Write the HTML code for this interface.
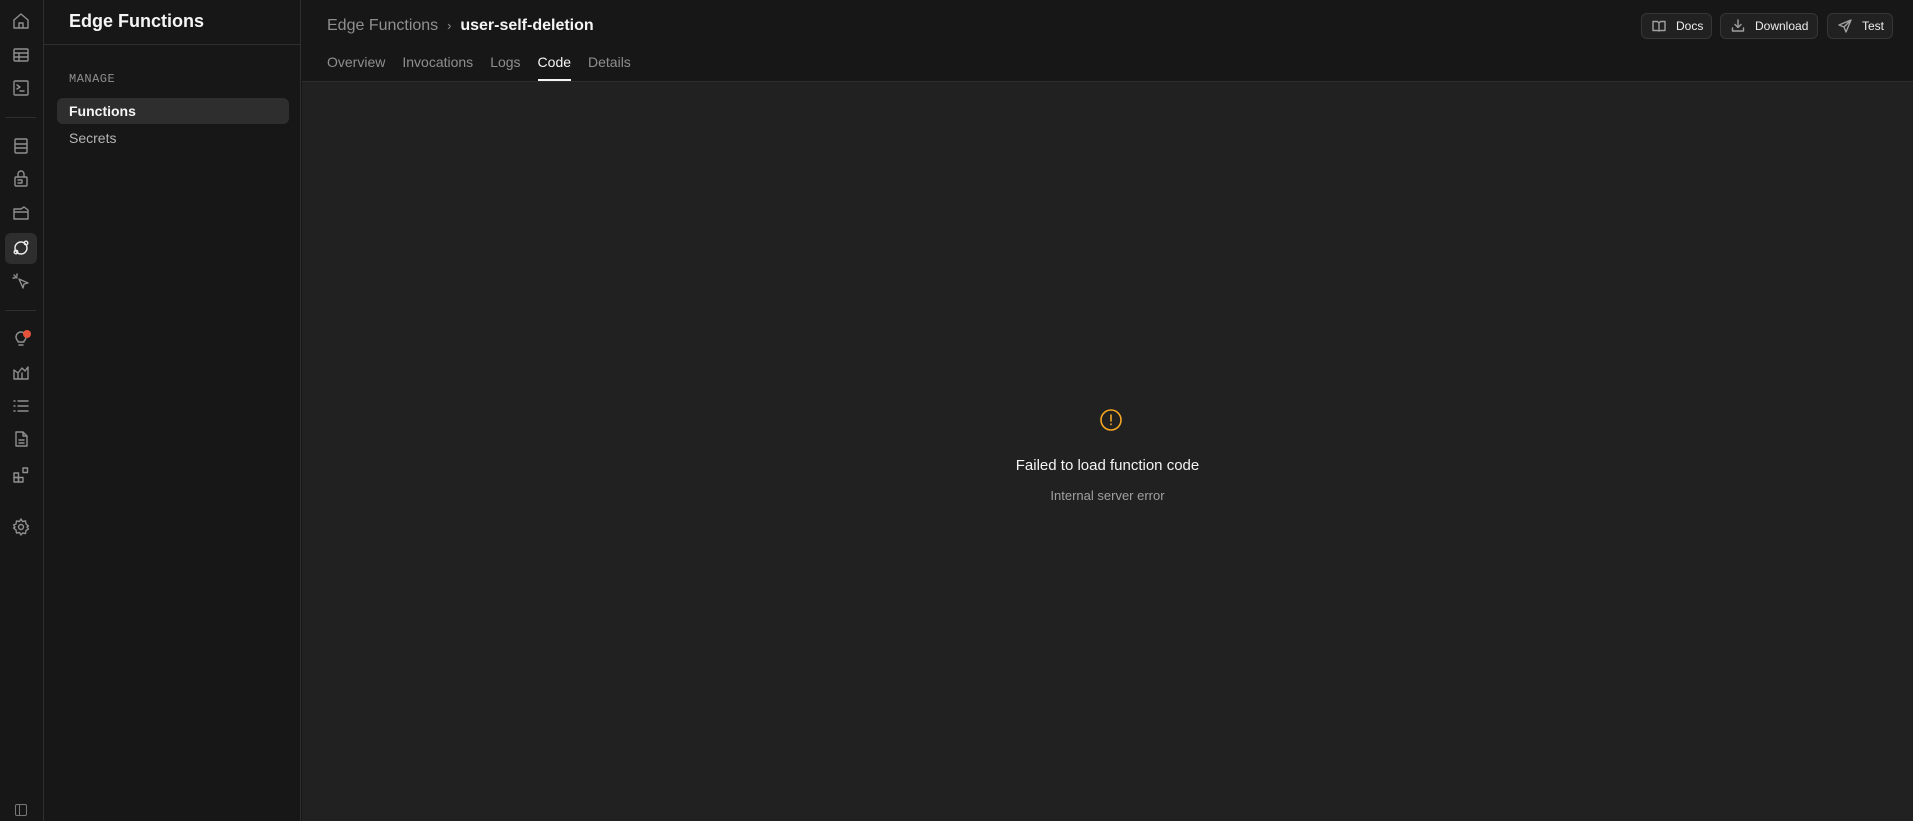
<!DOCTYPE html>
<html><head><meta charset="utf-8"><style>
*{box-sizing:border-box;margin:0;padding:0}
body{width:1913px;height:821px;background:#171717;font-family:"Liberation Sans",sans-serif;position:relative;overflow:hidden;color:#ededed}
.rail{position:absolute;left:0;top:0;width:44px;height:821px;background:#171717;border-right:1px solid #2e2e2e}
.ic{position:absolute;left:11px;width:20px;height:20px}
.ic svg{width:20px;height:20px;fill:none;stroke:#8f8f8f;stroke-width:1.4;stroke-linecap:round;stroke-linejoin:round}
.div{position:absolute;left:5px;width:31px;height:1px;background:#2e2e2e}
.active{position:absolute;left:5px;top:233px;width:32px;height:31px;background:#2e2e2e;border-radius:6px}
.side{position:absolute;left:44px;top:0;width:257px;height:821px;background:#171717;border-right:1px solid #2e2e2e}
.side h1{position:absolute;left:25px;top:11px;font-size:18px;font-weight:bold;color:#f5f5f5}
.side .hl{position:absolute;left:0;top:44px;width:256px;height:1px;background:#2e2e2e}
.manage{position:absolute;left:25px;top:72px;font-family:"Liberation Mono",monospace;font-size:12px;color:#8f8f8f;letter-spacing:.5px}
.item{position:absolute;left:13px;width:232px;height:26px;border-radius:6px;font-size:14px;padding-left:12px;line-height:26px}
.hdr{position:absolute;left:302px;top:0;right:0;height:82px;background:#171717;border-bottom:1px solid #2e2e2e}
.main{position:absolute;left:302px;top:82px;right:0;bottom:0;background:#212121}
.bc{position:absolute;left:25px;top:17px;font-size:16px;color:#8f8f8f}
.bc b{color:#f5f5f5;font-weight:bold}
.tabs{position:absolute;left:25px;top:54px;font-size:14px;color:#8f8f8f}
.tabs span{margin-right:17px;display:inline-block;height:27px;position:relative}
.tabs .on{color:#f5f5f5}
.tabs .on:after{content:"";position:absolute;left:0;right:0;bottom:0;height:2px;background:#f5f5f5}
.btn{position:absolute;top:13px;height:26px;border:1px solid #363636;background:#212121;border-radius:6px;font-size:12px;color:#ededed;line-height:24px;padding-left:34px}
.btn svg{position:absolute;left:10px;top:5px;width:14px;height:14px;fill:none;stroke:#a0a0a0;stroke-width:1.4;stroke-linecap:round;stroke-linejoin:round}
</style></head><body>
<div class="rail">
<div class="ic" style="top:11px"><svg viewBox="0 0 20 20"><path d="M3 9l7-6 7 6v8H3z M8 17v-5h4v5"/></svg></div>
<div class="ic" style="top:45px"><svg viewBox="0 0 20 20"><rect x="3" y="4" width="14" height="12" rx="1"/><path d="M3 8h14M3 12h14M8 8v8"/></svg></div>
<div class="ic" style="top:78px"><svg viewBox="0 0 20 20"><rect x="3" y="3" width="14" height="14" rx="1"/><path d="M6 7l3 2-3 2M9 13h4"/></svg></div>
<div class="div" style="top:117px"></div>
<div class="ic" style="top:136px"><svg viewBox="0 0 20 20"><rect x="4" y="3" width="12" height="14" rx="1"/><path d="M4 8h12M4 12h12"/></svg></div>
<div class="ic" style="top:169px"><svg viewBox="0 0 20 20"><rect x="4" y="8" width="12" height="9" rx="1"/><path d="M7 8V5a3 3 0 016 0v3M7 11h4v3H7"/></svg></div>
<div class="ic" style="top:203px"><svg viewBox="0 0 20 20"><path d="M3 6h7l3-2 4 3v9H3z M3 9h14"/></svg></div>
<div class="active"></div>
<div class="ic" style="top:238px"><svg viewBox="0 0 20 20" style="stroke:#ededed"><circle cx="10" cy="10" r="6"/><circle cx="15" cy="5" r="1.8"/><circle cx="5" cy="14" r="1.8"/></svg></div>
<div class="ic" style="top:272px"><svg viewBox="0 0 20 20"><path d="M8 7l9 4-4 1-1 4z M3 3l3 3M6 2v2M2 6h2"/></svg></div>
<div class="div" style="top:310px"></div>
<div class="ic" style="top:328px"><svg viewBox="0 0 20 20"><path d="M7 13a5 5 0 116 0v1H7z M8 17h4"/></svg><div style="position:absolute;left:12px;top:2px;width:8px;height:8px;border-radius:50%;background:#e5533d"></div></div>
<div class="ic" style="top:362px"><svg viewBox="0 0 20 20"><path d="M3 17V8l4 3 4-5 3 3 3-4v12z M7 17v-5M11 17v-6"/></svg></div>
<div class="ic" style="top:396px"><svg viewBox="0 0 20 20"><path d="M7 5h10M7 10h10M7 15h10M3 5h1M3 10h1M3 15h1"/></svg></div>
<div class="ic" style="top:429px"><svg viewBox="0 0 20 20"><path d="M5 3h7l4 4v10H5z M12 3v4h4 M8 11h5M8 14h5"/></svg></div>
<div class="ic" style="top:465px"><svg viewBox="0 0 20 20"><rect x="3" y="8" width="4.5" height="4.5"/><rect x="3" y="12.5" width="4.5" height="4.5"/><rect x="7.5" y="12.5" width="4.5" height="4.5"/><rect x="12" y="3" width="4.5" height="4.5"/></svg></div>
<div class="ic" style="top:517px"><svg viewBox="0 0 20 20"><circle cx="10" cy="10" r="2.5"/><path d="M10 2l1.5 2.5 3-.5.5 3L17.5 9 16 10l1.5 2-2.5 1.5-.5 3-3-.5L10 18l-1.5-2.5-3 .5-.5-3L2.5 11 4 10 2.5 8 5 7l.5-3 3 .5z"/></svg></div>
<div style="position:absolute;left:15px;top:804px;width:12px;height:12px;border:1px solid #777;border-radius:2px"><div style="position:absolute;left:3px;top:0;width:1px;height:10px;background:#777"></div></div>
</div>
<div class="side">
<h1>Edge Functions</h1><div class="hl"></div>
<div class="manage">MANAGE</div>
<div class="item" style="top:98px;background:#2e2e2e;color:#f5f5f5;font-weight:bold">Functions</div>
<div class="item" style="top:125px;color:#b4b4b4">Secrets</div>
</div>
<div class="hdr">
<div class="bc">Edge Functions &nbsp;<span style="font-size:13px">&#8250;</span>&nbsp; <b>user-self-deletion</b></div>
<div class="tabs"><span>Overview</span><span>Invocations</span><span>Logs</span><span class="on">Code</span><span>Details</span></div>
<div class="btn" style="left:1339px;width:71px"><svg viewBox="0 0 14 14"><path d="M1 2.5h4.5L7 4l1.5-1.5H13v9H8.5L7 12l-1.5-.5H1z M7 4v8"/></svg>Docs</div>
<div class="btn" style="left:1418px;width:98px"><svg viewBox="0 0 14 14"><path d="M7 1v7M4 5.5L7 8.5 10 5.5M1.5 9v3h11V9"/></svg>Download</div>
<div class="btn" style="left:1525px;width:66px"><svg viewBox="0 0 14 14"><path d="M13 1L1 6l5 2 2 5z M13 1L6 8"/></svg>Test</div>
</div>
<div class="main">
<svg style="position:absolute;left:797px;top:326px" width="24" height="24" viewBox="0 0 24 24" fill="none" stroke="#f5a623" stroke-width="1.6"><circle cx="12" cy="12" r="10"/><path d="M12 7v6M12 16v.5" stroke-linecap="round"/></svg>
<div style="position:absolute;left:0;width:1611px;top:375px;text-align:center;font-size:15px;color:#f5f5f5">Failed to load function code</div>
<div style="position:absolute;left:0;width:1611px;top:406px;text-align:center;font-size:13px;color:#a0a0a0">Internal server error</div>
</div>
</body></html>
